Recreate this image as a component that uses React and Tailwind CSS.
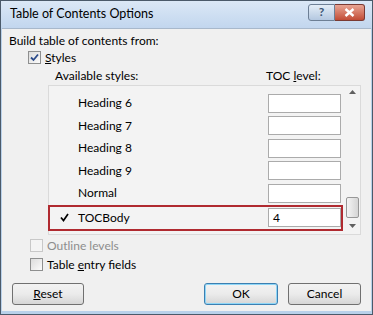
import React from 'react';

const font = { fontFamily: '"Segoe UI", Lato, "Noto Sans", sans-serif' };

const rows = [
    { name: 'Heading 6', level: '' },
    { name: 'Heading 7', level: '' },
    { name: 'Heading 8', level: '' },
    { name: 'Heading 9', level: '' },
    { name: 'Normal', level: '' },
    { name: 'TOCBody', level: '4', selected: true },
];

const CheckBox = ({ checked, disabled }) => (
    <span className={`w-[13px] h-[13px] border flex items-center justify-center ${disabled ? 'border-[#c8c8c8] bg-[#f4f4f4]' : 'border-[#8e8f8f] bg-gradient-to-br from-[#dcdcdc] to-[#fbfbfb]'}`}>
        {checked && (
            <svg width="9" height="9" viewBox="0 0 9 9">
                <path d="M1 4.5 L3.5 7 L8 1.5" fill="none" stroke="#2a4a8a" strokeWidth="1.8" />
            </svg>
        )}
    </span>
);

const Button = ({ children, primary, className }) => (
    <button className={`h-[22px] rounded-[3px] border text-[12px] text-black bg-gradient-to-b from-[#f2f2f2] via-[#ebebeb] to-[#d6d6d6] ${primary ? 'border-[#3c7fb1] shadow-[inset_0_0_0_1px_#8ed6f7]' : 'border-[#707070]'} ${className}`}>
        {children}
    </button>
);

export default function App() {
    return (
        <div className="w-[373px] h-[315px] bg-[#b9d1ea] border border-[#4b5a6a] flex flex-col" style={font}>
            {/* title bar */}
            <div className="h-[27px] flex items-center bg-gradient-to-b from-[#dbe8f6] to-[#c2d6ee] pl-[9px] pr-[7px]">
                <span className="text-[12.5px] text-black flex-1">Table of Contents Options</span>
                <div className="flex -mt-[5px]">
                    <div className="w-[27px] h-[17px] border border-[#6d7f95] rounded-l-[3px] bg-gradient-to-b from-[#e4edf7] to-[#b4c8e0] flex items-center justify-center text-[12px] text-[#3b5475] font-bold">?</div>
                    <div className="w-[30px] h-[17px] border border-l-0 border-[#7a3a33] rounded-r-[3px] bg-gradient-to-b from-[#e8a493] to-[#c14b35] flex items-center justify-center">
                        <svg width="11" height="9" viewBox="0 0 11 9">
                            <path d="M1.5 1 L9.5 8 M9.5 1 L1.5 8" stroke="#fff" strokeWidth="2.4" />
                        </svg>
                    </div>
                </div>
            </div>

            {/* client */}
            <div className="flex-1 mx-[1px] mb-[3px] bg-[#f0f0f0] border-t border-[#a8b8cb] flex flex-col text-[12px] text-black">
                <div className="pl-[7px] pt-[3px] h-[19px]">Build table of contents from:</div>
                <label className="flex items-center gap-[4px] pl-[26px] h-[19px]">
                    <CheckBox checked />
                    <span><u>S</u>tyles</span>
                </label>
                <div className="flex h-[18px] items-center">
                    <span className="pl-[53px] w-[264px]">Available styles:</span>
                    <span>TOC <u>l</u>evel:</span>
                </div>

                {/* list */}
                <div className="ml-[46px] mr-[10px] h-[150px] border border-[#dadada] bg-[#f3f3f3] flex">
                    <div className="flex-1 flex flex-col pt-[6px]">
                        {rows.map((r) => (
                            <div
                                key={r.name}
                                className={`flex items-center -mx-[1px] mr-[2px] border-2 ${r.selected ? 'h-[26px] border-[#b02a30]' : 'h-[22.5px] border-transparent'}`}
                            >
                                <span className="w-[28px] flex justify-center">
                                    {r.selected && (
                                        <svg width="9" height="9" viewBox="0 0 9 9">
                                            <path d="M1 4.5 L3.5 7.5 L8 1" fill="none" stroke="#000" strokeWidth="1.7" />
                                        </svg>
                                    )}
                                </span>
                                <span className="w-[190px]">{r.name}</span>
                                <span className="w-[73px] h-[19px] border border-[#ababab] bg-white flex items-center pl-[4px] text-[12px]">{r.level}</span>
                            </div>
                        ))}
                    </div>
                    {/* scrollbar */}
                    <div className="w-[15px] flex flex-col items-center pt-[4px] pb-[6px]">
                        <svg width="7" height="4" viewBox="0 0 7 4"><path d="M0 4 L3.5 0 L7 4 Z" fill="#606060" /></svg>
                        <div className="flex-1" />
                        <div className="w-[13px] h-[21px] border border-[#979797] rounded-[2px] bg-gradient-to-r from-[#f4f4f4] to-[#d5d5d5] mb-[6px]" />
                        <svg width="7" height="4" viewBox="0 0 7 4"><path d="M0 0 L3.5 4 L7 0 Z" fill="#606060" /></svg>
                    </div>
                </div>

                <label className="flex items-center gap-[4px] pl-[28px] h-[19px] mt-[1px] text-[#8d8d8d]">
                    <CheckBox disabled />
                    <span>Outline levels</span>
                </label>
                <label className="flex items-center gap-[4px] pl-[28px] h-[19px]">
                    <CheckBox />
                    <span>Table <u>e</u>ntry fields</span>
                </label>

                <div className="flex items-center mt-[9px] pl-[10px]">
                    <Button className="w-[72px]"><u>R</u>eset</Button>
                    <div className="flex-1" />
                    <Button primary className="w-[74px]">OK</Button>
                    <Button className="w-[73px] ml-[10px] mr-[10px]">Cancel</Button>
                </div>
            </div>
        </div>
    );
}
